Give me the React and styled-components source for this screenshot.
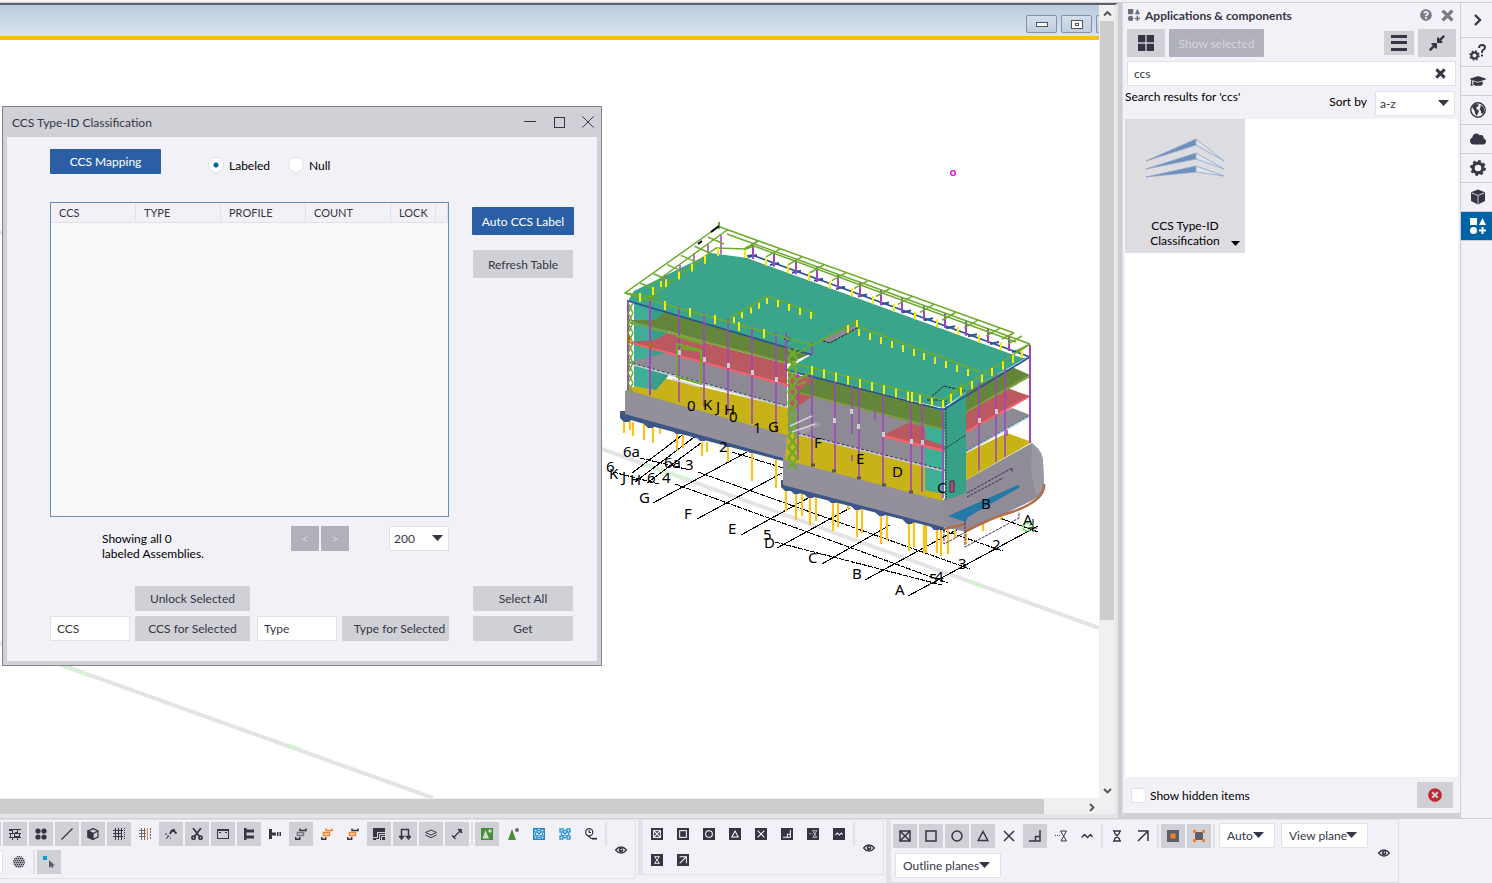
import React from "react";
import styled, { createGlobalStyle, css } from "styled-components";
import {
  FaGraduationCap, FaCloud, FaQuestionCircle, FaCompressAlt, FaTimesCircle,
} from "react-icons/fa";

const c = {
  panel: "#f2f1f7", btn: "#d0d1d6", btnOff: "#b0b1ba", ink: "#363545",
  line: "#e1e1e7", edge: "#cfcfd6", blue: "#2a5fa6", orange: "#f58220",
};

const GlobalStyle = createGlobalStyle`
  * { box-sizing: border-box; }
  body { margin: 0; background: ${c.panel}; }
  body, button, input, select, table {
    font-family: Lato, "Noto Sans", sans-serif; font-size: 12px; line-height: 15px; color: ${c.ink};
  }
  button { border: 0; padding: 0; }
`;

const Page = styled.div`
  min-height: 100vh; display: grid; grid-template-rows: 3px 1fr auto;
`;
const TopStrip = styled.div`background: #f4f4f8; border-bottom: 1px solid ${c.edge};`;
const Main = styled.main`
  display: grid; grid-template-columns: minmax(0, 1fr) 5px 338px 31px; min-height: 0;
`;
const Viewport = styled.section`
  display: grid; grid-template-columns: minmax(0, 1fr) 16px; grid-template-rows: 35px 1fr 16px;
  border-top: 2px solid #5e6068; border-right: 3px solid #e6e6ea; border-bottom: 4px solid #e4e4e9;
  background: #fff;
`;
const WindowBar = styled.div`
  display: flex; justify-content: flex-end; gap: 4px; padding-top: 10px; overflow: hidden;
  background: linear-gradient(#bccbdc, #d8e3f0); border-bottom: 4px solid #fdbe0f;
`;
const WindowButton = styled.button`
  flex: none; display: grid; place-items: center; width: 31px; height: 18px;
  background: linear-gradient(#d3deea, #bfcede); border: 1px solid #8292ab; border-radius: 2px;
  ${(p) => p.$cut && css`width: 3px; border-right: 0; border-radius: 2px 0 0 2px;`}
`;
const Scroll = styled.div`
  display: flex; flex-direction: ${(p) => (p.$vertical ? "column" : "row")}; background: #f0f0f0;
  ${(p) => p.$vertical && css`grid-row: 1 / 3; grid-column: 2;`}
  ${(p) => !p.$vertical && css`grid-column: 1 / 3; padding: 1px 16px 0 0;`}
`;
const Thumb = styled.div`flex: ${(p) => p.$size}; background: #cdcdcd; margin: ${(p) => (p.$vertical ? "0 1px" : "0")};`;
const ScrollRest = styled.div`flex: ${(p) => p.$size};`;
const ScrollArrow = styled.button`display: grid; place-items: center; width: 16px; height: 16px; background: none;`;
const Canvas = styled.div`position: relative; overflow: hidden; background: #fff;`;
const Scene = styled.svg`
  position: absolute; inset: 0; width: 100%; height: 100%;
  text { font-family: "Noto Sans", sans-serif; font-size: 15px; fill: #000; }
`;
const Splitter = styled.div`background: #cdcdd5; border-right: 1px solid #dcdce2;`;

/* dialog */
const Dialog = styled.section`
  position: absolute; left: 2px; top: 66px; width: 600px; height: 560px;
  display: flex; flex-direction: column;
  border: 1px solid #81828d; background: ${c.btn}; padding: 0 4px 4px;
`;
const DialogHead = styled.header`
  height: 30px; flex: none; display: flex; align-items: center; gap: 13px; padding: 0 1px 0 5px;
`;
const DialogTitle = styled.h2`margin: 0; flex: 1; font-size: 12px; font-weight: 400;`;
const HeadButton = styled.button`width: 16px; height: 16px; background: none; display: grid; place-items: center;`;
const DialogBody = styled.div`
  flex: 1; display: flex; gap: 23px; padding: 12px 23px 20px 43px; background: ${c.panel};
`;
const LeftCol = styled.div`width: 399px; display: flex; flex-direction: column;`;
const RightCol = styled.div`
  width: 102px; display: flex; flex-direction: column; justify-content: space-between; padding-top: 58px;
`;
const Stack = styled.div`display: flex; flex-direction: column; align-items: center; gap: ${(p) => p.$gap}px;`;
const Button = styled.button`
  width: ${(p) => p.$w}px; height: ${(p) => p.$h || 25}px; border-radius: 1px; white-space: nowrap;
  padding-left: ${(p) => p.$lead || 0}px;
  background: ${(p) => (p.$primary ? c.blue : c.btn)}; color: ${(p) => (p.$primary ? "#fff" : c.ink)};
  &:disabled { background: ${c.btnOff}; color: #d6d6dc; }
`;
const TopRow = styled.div`display: flex; gap: 47px; margin-bottom: 28px;`;
const Radios = styled.fieldset`
  border: 0; margin: 0; padding: 8px 0 0; display: flex; height: 25px; min-width: 0;
`;
const RadioLabel = styled.label`display: flex; align-items: center; gap: 5px; width: 80px; height: 16px; color: #000;`;
const Radio = styled.input.attrs({ type: "radio" })`
  appearance: none; width: 16px; height: 16px; margin: 0; border-radius: 50%; border: 1px solid ${c.line};
  background: #fff;
  &:checked { background: radial-gradient(circle, #0063a3 0 2px, #fff 3px); }
`;
const TableFrame = styled.div`height: 315px; border: 1px solid #6a8db3; background: #f9f9fc;`;
const Table = styled.table`
  width: 100%; table-layout: fixed; border-collapse: separate; border-spacing: 0; background: ${c.panel};
  th {
    height: 20px; padding: 0 8px; text-align: left; font-size: 11px; font-weight: 400;
    border-right: 1px solid ${c.line}; border-bottom: 1px solid ${c.line}; overflow: hidden;
  }
`;
const PagingRow = styled.div`display: flex; align-items: flex-start; margin-top: 9px; height: 60px;`;
const Status = styled.p`margin: 0; padding: 5px 0 0 52px; width: 241px; color: #000;`;
const Pager = styled.div`display: flex; gap: 2px; width: 98px;`;
const UnlockRow = styled.div`padding-left: 85px; margin-bottom: 5px; height: 25px;`;
const EditRow = styled.div`display: flex; justify-content: space-between;`;
const EditPair = styled.div`display: flex; gap: 5px;`;
const TextField = styled.input`
  width: 80px; height: 25px; padding: 0 6px; background: #fff; border: 1px solid ${c.line};
`;
const SelectWrap = styled.span`
  position: relative; display: inline-block; width: ${(p) => p.$w}px; height: 25px; flex: none;
  margin-top: ${(p) => p.$drop || 0}px;
  svg { position: absolute; right: ${(p) => p.$inset || 6}px; top: 9px; pointer-events: none; }
`;
const SelectBox = styled.select`
  appearance: none; width: 100%; height: 100%; margin: 0; border: 1px solid ${c.line}; border-radius: 1px;
  padding: 0 0 0 ${(p) => p.$pad || 4}px; background: #fff;
`;

/* catalog panel */
const Panel = styled.aside`
  display: flex; flex-direction: column; background: ${c.panel};
  border-right: 1px solid ${c.edge}; border-bottom: 5px solid ${c.btn};
`;
const PanelHead = styled.header`height: 26px; display: flex; align-items: center; gap: 5px; padding: 0 5px 2px 5px;`;
const PanelTitle = styled.h1`margin: 0; flex: 1; font-size: 12px; line-height: 15px; font-weight: 700;`;
const PlainIcon = styled.button`display: grid; place-items: center; background: none; color: #7b7b88; min-width: 16px;`;
const PanelTools = styled.div`display: flex; align-items: center; gap: 4px; padding: 0 4px; height: 28px;`;
const ToolButton = styled.button`
  display: grid; place-items: center; width: ${(p) => p.$w}px; height: ${(p) => p.$h || 28}px;
  background: ${c.btn}; color: ${c.ink}; margin-left: ${(p) => (p.$end ? "auto" : "0")};
`;
const SearchBox = styled.div`
  display: flex; align-items: center; height: 25px; margin: 4px 4px 0; padding: 0 7px 0 6px;
  background: #fff; border: 1px solid ${c.line};
`;
const SearchInput = styled.input`flex: 1; min-width: 0; border: 0; outline: 0; padding: 0; background: none;`;
const ResultRow = styled.div`
  display: flex; align-items: flex-start; height: 33px; padding: 3px 5px 0 2px; color: #000;
`;
const ResultText = styled.span`flex: 1;`;
const SortLabel = styled.label`display: flex; gap: 8px; line-height: 25px;`;
const Results = styled.div`flex: 1; background: #fff; margin: 0 2px;`;
const Tile = styled.button`
  width: 120px; height: 134px; background: #dcdce1; color: #000; display: flex; flex-direction: column;
  align-items: center; padding: 18px 0 5px;
`;
const TileName = styled.span`
  width: 100%; margin-top: auto; display: grid; grid-template-columns: 1fr auto 1fr; align-items: end; white-space: nowrap;
  svg { justify-self: end; margin-right: 5px; }
`;
const TileText = styled.span`grid-column: 2; text-align: center;`;
const PanelFoot = styled.footer`height: 36px; display: flex; align-items: center; padding: 0 7px 0 8px;`;
const CheckLabel = styled.label`display: flex; align-items: center; gap: 4px; flex: 1; color: #000;`;
const Check = styled.input.attrs({ type: "checkbox" })`
  appearance: none; width: 15px; height: 15px; margin: 0; background: #fff; border: 1px solid ${c.line};
`;

const Rail = styled.nav`background: ${c.panel}; border-bottom: 5px solid ${c.panel};`;
const RailButton = styled.button`
  width: 31px; height: ${(p) => p.$h || 29}px; display: grid; place-items: center; padding-left: 2px;
  background: ${(p) => (p.$on ? "#0063a3" : c.panel)}; color: ${(p) => (p.$on ? "#fff" : c.ink)};
  border-bottom: 1px solid ${c.edge};
`;

/* bottom toolbars */
const Toolbars = styled.footer`
  display: flex; align-items: flex-start; height: 65px; border-top: 1px solid ${c.edge}; background: ${c.panel};
`;
const Bar = styled.div`
  display: flex; flex: none; height: ${(p) => p.$h}px; width: ${(p) => p.$w}px; padding: ${(p) => p.$pad};
  border: 1px solid ${c.line}; border-left: ${(p) => (p.$grip ? `5px solid ${c.line}` : "0")};
  margin-right: 2px;
`;
const BarRows = styled.div`flex: 1; display: flex; flex-direction: column; gap: ${(p) => p.$gap}px;`;
const BarRow = styled.div`display: flex; align-items: center; gap: 2px;`;
const Tool = styled.button`
  width: 24px; height: 24px; flex: none; display: grid; place-items: center;
  background: ${(p) => (p.$on ? c.btn : "none")};
`;
const Sep = styled.i`width: 2px; height: 24px; flex: none; background: ${c.line};`;
const RowEdge = styled.i`width: 1px; height: 24px; flex: none; background: ${c.btn};`;
const PlainField = styled.i`width: 3px; height: 24px; background: #fff; border: 1px solid ${c.line}; border-left: 0; margin-right: 2px;`;
const Eye = styled.button`align-self: center; width: 28px; background: none; display: grid; place-items: center;`;
const MenuGroup = styled.div`display: flex; gap: 6px; padding-left: 2px;`;

/* ---------- icons, 12 unit grid ---------- */
const I = ({ children, s = 12, color = c.ink, w = 1, crisp }) => (
  <svg width={s} height={s} viewBox="0 0 12 12" fill="none" stroke={color} strokeWidth={w}
    shapeRendering={crisp ? "crispEdges" : "auto"} aria-hidden="true">{children}</svg>
);
const Caret = () => <svg width="11" height="6" viewBox="0 0 11 6"><path d="M0 0h11L5.500 6z" fill={c.ink} /></svg>;
const Cross = ({ s, color }) => <I s={s} color={color} w={3.200}><path d="M1.500 1.500l9 9M10.500 1.500l-9 9" /></I>;
const Steps = ({ a = c.ink, b = "#777682", d = c.ink }) => (
  <I w={1.500}>
    <path d="M5 .5v2h6V.5" stroke={a} /><path d="M2.500 4.500v3h6v-3z" stroke={b} fill="none" /><path d="M.7 9v2.300h4V9" stroke={d} />
  </I>
);
const shapes = {
  boxx: <><rect x="1" y="1" width="10" height="10" /><path d="M1 1l10 10M11 1L1 11" /></>,
  box: <rect x="1" y="1" width="10" height="10" />,
  circle: <circle cx="6" cy="6" r="5" />,
  tri: <path d="M6 1.500L10.800 10.500H1.200z" />,
  x: <path d="M1 1l10 10M11 1L1 11" />,
  corner: <path d="M11 0v11H0M6.500 11V6.500H11" />,
  glass2: <path d="M0 5.500h1M2 5.500h1M4 5.500h1M5.500 1h6L6 11h5.500L5.500 1" strokeWidth="1" />,
  wave: <path d="M.5 7.500l3-3 3 3 3-3 2 2.500" />,
  glass: <path d="M2 1h8M2 11h8M3.500 1v2l5 6v2M8.500 1v2l-5 6v2" strokeWidth="1.300" />,
  arrow: <path d="M1 1h10v10M11 1L1 11" />,
};
const Shape = ({ n }) => <I w={1.500}>{shapes[n]}</I>;
const SnapTile = ({ n }) => (
  <svg width="12" height="12" viewBox="0 0 12 12" aria-hidden="true">
    <rect width="12" height="12" fill={c.ink} />
    <g transform="translate(2 2) scale(.67)" fill="none" stroke="#fff" strokeWidth="1.500">{shapes[n]}</g>
  </svg>
);
const EyeIcon = () => (
  <svg width="12" height="8" viewBox="0 0 12 8" aria-hidden="true">
    <path d="M.6 4Q3 1 6 1t5.400 3Q9 7 6 7T.6 4z" fill="none" stroke={c.ink} strokeWidth="1.300" />
    <circle cx="6" cy="4" r="2.300" fill={c.ink} /><circle cx="6.300" cy="3.500" r=".7" fill="#fff" />
  </svg>
);
const AppsIcon = ({ s = 12, color = "currentColor" }) => (
  <svg width={s} height={s} viewBox="0 0 16 16" fill={color} aria-hidden="true">
    <path d="M0 0h7v7H0zM12.500 0L16 7H9zM11.500 9h2v2.500H16v2h-2.500V16h-2v-2.500H9v-2h2.500z" /><circle cx="3.500" cy="12.500" r="3.500" />
  </svg>
);
const NodeBoxes = ({ framed }) => (
  <I color="#1e8bcd" w={1.300}>
    {framed && <rect x=".5" y=".5" width="11" height="11" />}
    <rect x="1" y="1" width="3" height="3" /><rect x="8" y="1" width="3" height="3" />
    <rect x="1" y="8" width="3" height="3" /><rect x="8" y="8" width="3" height="3" />
    <path d="M4 4l4 4M8 4L4 8M5 2.500h2M5 9.500h2M2.500 5v2M9.500 5v2" />
  </I>
);

const selectTools = [
  ["Walls", 1, <I crisp w={1}><path d="M0 1.500h12M0 5.500h12M0 9.500h12M3.500 2v3M8.500 2v3M5.500 6v3M1.500 6v3M10.500 6v3M3.500 10v2M8.500 10v2M0 2.500h3M6 4.500h3M5 8.500h5" /></I>],
  ["Points", 1, <I color="none"><g fill={c.ink}><circle cx="3" cy="3" r="2.600" /><circle cx="9" cy="3" r="2.600" /><circle cx="3" cy="9" r="2.600" /><circle cx="9" cy="9" r="2.600" /></g></I>],
  ["Lines", 1, <I w={1.300}><path d="M.5 11.500l11-11" /></I>],
  ["Parts", 1, <I w={1.200}><path d="M6 .6l5 2.400v6L6 11.400 1 9V3zM1 3l5 2.500L11 3" /><path d="M6 5.500L1 3v6l5 2.400z" fill={c.ink} /></I>],
  ["Grids", 1, <I crisp><path d="M0 2.500h9M0 5.500h9M0 8.500h9M2.500 0v12M5.500 0v12M8.500 0v12" /><path d="M11.500 0v12M9 2.500h3M9 8.500h3" strokeDasharray="1 1" /></I>],
  ["Grid line", 0, <I crisp color="#6d6c79"><path d="M0 2.500h7M0 5.500h7M0 8.500h7M2.500 0v12M5.500 0v12" /><path d="M8.500 0v12" stroke={c.orange} /><path d="M11.500 0v12" strokeDasharray="2 1" /></I>],
  ["Welds", 1, <I w={1.800}><path d="M5 5l3-3 3.500 3.500M7 2l-2 4M9 1v3" /><path d="M0 6h2M2 8h2M1 11l3-3M5 10h1" strokeWidth="1" /></I>],
  ["Cuts", 1, <I w={1.700}><path d="M2 0l6.500 8.500M10 0L3.500 8.500" /><circle cx="2.500" cy="9.700" r="1.600" /><circle cx="9.500" cy="9.700" r="1.600" /></I>],
  ["Views", 1, <I w={1} crisp><rect x=".5" y="1.500" width="11" height="9" /><path d="M0 2.500h12M2 4.500h2M8 4.500h2" /></I>],
  ["Bolts", 1, <I color="none"><path d="M1 0h2.500v1.500H11v3H3.500v3H11v3H3.500V12H1z" fill={c.ink} /></I>],
  ["Single bolt", 0, <I color="none"><path d="M0 1h3v3.500h4v3H3V11H0zM8 4h1v4H8zM9.500 4h1v4h-1zM11 4h1v4h-1z" fill={c.ink} /></I>],
  ["Reinforcement", 1, <Steps />],
  ["Rebar set", 0, <Steps a={c.orange} b={c.orange} />],
  ["Rebar group", 0, <Steps b={c.orange} />],
  ["Surfaces", 1, <I crisp><rect width="12" height="12" fill={c.ink} stroke="none" /><path d="M0 9.500h4.500v-5H12M3 12v-.5h3.500v-5H12M8.500 12V8.500H12" stroke="#d0d1d6" /></I>],
  ["Loads", 1, <I w={1.500}><path d="M2.500 9V1.500h7V9M.5 8.500h4L2.500 11zM7.500 8.500h4L9.500 11z" /></I>],
  ["Planes", 1, <I w={1}><path d="M6 2l5.500 2.500L6 7 .5 4.500zM.5 7L6 9.700 11.500 7" /></I>],
  ["Distances", 1, <I w={1.300}><path d="M2.500 9.500L9 3M1 7.500L4.500 11M7 1L11 5" /><circle cx="9.500" cy="2.500" r="1" /></I>],
  null,
  ["Components", 1, <I color="none"><rect width="12" height="12" fill="#4a8a3c" /><path d="M1.500 10.500L4.500 2l3.500 8.500z" fill="#d6dbd2" /><circle cx="9" cy="3" r="1.700" fill="#d6dbd2" /></I>],
  ["Component objects", 0, <I color="none"><path d="M1 12L5 1l4 11z" fill="#4a8a3c" /><circle cx="10" cy="2" r="2" fill="#6d6c79" /></I>],
  ["Assemblies", 0, <NodeBoxes framed />],
  ["Assembly objects", 0, <NodeBoxes />],
  ["Task", 0, <I w={1.200}><circle cx="4.200" cy="4.200" r="3.600" /><path d="M4.200 2v2.500H6M3 7.500l3 3h6" /><path d="M7 10.700h5" strokeWidth="1.800" /></I>],
];
const snapNames = ["boxx", "box", "circle", "tri", "x", "corner", "glass2", "wave"];
const snapOn = [1, 1, 1, 1, 0, 1, 0, 0];

/* ---------- model ---------- */
const G = "#6dab2d", P = "#9f45bf", Y = "#f4f000", B = "#2b4f9b", PILE = "#fbc21b";
const along = (x1, y1, x2, y2, n) =>
  Array.from({ length: n }, (_, i) => [x1 + ((x2 - x1) * i) / (n - 1), y1 + ((y2 - y1) * i) / (n - 1)]);
const sticks = (pts, up, down) => pts.map(([x, y]) => `M${Math.round(x)} ${y - up}V${y + down}`).join("");
const truss = (x1, x2, y1, y2, step) => {
  let d = "";
  for (let y = y1; y < y2; y += step) d += `M${x1} ${y}L${x2} ${y + step}M${x2} ${y}L${x1} ${y + step}`;
  return d;
};
const back = along(736, 233, 1000, 328, 13);
const leftRail = along(640, 283, 708, 237, 6);
const piles = [
  [624, 420, 433], [630, 420, 430], [633, 422, 436], [644, 424, 440], [653, 428, 443], [660, 428, 434],
  [677, 434, 450], [683, 434, 448], [702, 442, 456], [707, 442, 452], [728, 444, 462], [752, 450, 481],
  [776, 456, 488], [786, 490, 511], [796, 492, 520], [802, 492, 516], [810, 496, 525], [816, 496, 521],
  [833, 500, 531], [838, 500, 527], [848, 500, 510], [857, 505, 537], [862, 505, 533], [881, 512, 544],
  [887, 512, 540], [909, 520, 551], [914, 520, 547], [924, 525, 553], [926, 525, 553], [937, 527, 553], [941, 530, 556],
  [948, 530, 554], [955, 530, 538], [966, 528, 544], [983, 520, 531], [1001, 514, 520],
];
const footsL = [[626, 418], [650, 424], [678, 430], [702, 437], [728, 443], [752, 449], [776, 455]];
const footsR = [[787, 487], [796, 490], [810, 494], [833, 499], [857, 506], [881, 512], [909, 520], [936, 526]];
const labels = [
  ["0", 687, 411], ["K", 703, 410], ["J", 716, 412], ["H", 724, 415], ["0", 729, 422], ["1", 753, 433], ["G", 768, 432],
  ["2", 719, 452], ["6a", 623, 457], ["6a", 664, 468], ["3", 685, 470], ["6", 606, 472], ["K", 609, 479], ["J", 622, 482],
  ["H", 630, 485], ["6", 647, 483], ["4", 662, 483], ["G", 639, 503], ["F", 684, 519], ["E", 728, 534], ["5", 763, 540],
  ["D", 764, 548], ["C", 808, 563], ["B", 852, 579], ["A", 895, 595], ["F", 814, 448], ["E", 856, 464], ["D", 892, 477],
  ["C", 937, 493], ["B", 981, 509], ["A", 1023, 525], ["2", 992, 550], ["3", 958, 569], ["4", 935, 582], ["5", 929, 584],
];

const Model = () => (
  <Scene viewBox="0 40 1099 758" preserveAspectRatio="xMinYMin slice" role="img" aria-label="3D model of the building">
    <g fill="none" stroke="#e4e4e4" strokeWidth="4">
      <path d="M0 232L1099 628M0 643L433 798" />
      <path d="M645 465L694 481M970 582L982 587M60 665L90 676M288 745L300 749" stroke="#d4f3d4" strokeWidth="3" />
    </g>
    <g stroke="#000" strokeWidth="1.100" fill="none" shapeRendering="crispEdges">
      <path d="M632 473L685 433M635 482L697 435M647 483L701 443M653 503L747 452M697 519L782 473M741 535L810 497M777 548L850 508M822 564L890 525M865 580L960 528M908 596L1038 526" />
      <path strokeDasharray="5 1" d="M640 458L690 470M613 472L659 484M732 452L783 468M940 529L1003 551M698 472L970 569M675 484L948 583M775 542L942 585M1000 518L1038 532" />
    </g>
    <path d={piles.map(([x, a, b]) => `M${x} ${a}V${b}`).join("")} stroke={PILE} strokeWidth="2.200" />
    <g fill="#3c5687">
      <path d="M621 411L783 455V461L655 427 620 417zM783 481L944 523V530L783 489z" />
      {footsL.concat(footsR).map(([x, y]) => <path key={x} d={`M${x - 6} ${y - 7}h12v7l-3 4h-5l-4-4z`} />)}
    </g>
    {/* left wing */}
    <path d="M625 391L628 389 793 433V461L783 458 625 414z" fill="#93909b" />
    <path d="M627 390L655 376 790 408V436z" fill="#c7b317" />
    <path d="M634 300L668 310V376L655 390 634 386z" fill="#3fae97" />
    <path d="M651 305L668 310V376L656 390 651 388z" fill="#38a089" />
    <path d="M628 320H655L668 310 815 352 787 364z" fill="#64863a" />
    <path d="M628 342L655 340 668 333V350L787 385z" fill="#ba5a60" />
    <path d="M668 333L787 364V385L668 352z" fill="#ba5a60" />
    <path d="M628 362L651 357 668 352 787 385V407z" fill="#8e8a93" />
    <g fill="none">
      <path d="M628 322L787 363" stroke="#7ea03a" strokeWidth="2" />
      <path d="M628 342L790 386" stroke="#f8606b" strokeWidth="2" />
      <path d="M628 363L787 407" stroke="#c7c7cc" strokeWidth="2" />
      <path d="M628 362L787 406" stroke="#254a63" strokeWidth="1" strokeDasharray="3 2" />
    </g>
    {/* front of right wing */}
    <path d="M783 457L943 498V527L783 485z" fill="#93909b" />
    <path d="M788 425L943 468V501L785 460z" fill="#c7b317" />
    <path d="M788 380L943 425V471L820 440 788 432z" fill="#8e8a93" />
    <path d="M788 372L830 384 790 412z" fill="#ba5a60" />
    <path d="M790 369L943 409V431L798 392 812 380z" fill="#64863a" />
    <path d="M793 435L815 422 822 424 796 438z" fill="#9f9ca8" />
    <path d="M925 408H944V494L925 490z" fill="#3fae97" />
    <path d="M908 403L946 412V431L908 420z" fill="#64863a" />
    <path d="M883 435L908 423 925 427V439L945 446V451z" fill="#ba5a60" />
    <path d="M883 436L945 451" stroke="#f8606b" strokeWidth="2.500" />
    <path d="M800 393L946 430" stroke="#7ea03a" strokeWidth="1.500" />
    <path d="M793 433L945 471" stroke="#c7c7cc" strokeWidth="2" />
    <path d="M793 432L945 470" stroke="#3b2a4a" strokeWidth="1" strokeDasharray="3 2" />
    {/* side facade */}
    <path d="M943 500L966 480 1032 443 1038 450 1043 460 1044 487Q1042 496 1031 501L967 532 943 527z" fill="#8f8c97" />
    <path d="M1032 443Q1044 452 1043 463L1044 487 1036 496 1031 470z" fill="#9a98a3" />
    <path d="M944 529L966 524M966 531Q990 518 1012 512 1046 500 1044 484" fill="none" stroke="#b06e48" strokeWidth="2.500" />
    <path d="M948 516L1018 485 1020 487 968 517 966 522z" fill="#2479a6" />
    <path d="M966 453L1007 433 1032 442 966 480z" fill="#c7b317" />
    <path d="M966 430L1012 408 1030 415 966 452z" fill="#8e8a93" />
    <path d="M966 407L1007 388 1030 396 966 432z" fill="#ba5a60" />
    <path d="M966 391L1012 367 1030 375 966 412z" fill="#64863a" />
    <path d="M966 432L1030 396" stroke="#f8606b" strokeWidth="2" />
    <path d="M966 412L1030 376" stroke="#7ea03a" strokeWidth="2" />
    <path d="M966 452L1030 416" stroke="#c7c7cc" strokeWidth="2" />
    <path d="M966 451L1030 415" stroke="#1e6d8c" strokeWidth="1" strokeDasharray="3 1" />
    {/* roof */}
    <path d="M711 253L747 258 1022 358 1028 357 966 392 943 408 786 370 812 354 628 301 634 291z" fill="#3aa58b" />
    <path d="M944 409L966 392V493L945 500z" fill="#36a088" />
    <path d="M823 339L856 325 857 329 828 343z" fill="#8e8a93" />
    <path d="M823 341L830 343 857 328M932 396L944 386 965 391M927 400H944" fill="none" stroke="#222" strokeWidth="1" strokeDasharray="3 1" />
    <path d="M784 339l4-2 4 2-5 3zM946 400V500M946 448L966 435" fill="none" stroke="#333" strokeWidth="1" strokeDasharray="2 1" />
    <path d="M628 301L812 355M786 370L943 410 1030 357M747 256L752 255 1030 357" stroke={B} strokeWidth="1.600" fill="none" />
    <path d={back.map(([x, y]) => `M${x + 12} ${y + 24}l9 -2`).join("")} stroke={B} strokeWidth="2" />
    {/* columns */}
    <g stroke={P} fill="none">
      <path d="M628 300V390M650 297V395M1030 345V443" strokeWidth="2" />
      <path d="M679 306V402M704 313V407M728 319V414M752 326V424M776 332V432M786 333V370M812 343V355" strokeWidth="1.600" />
      <path d="M798 372V460M812 366V467M835 382V471M859 388V478M883 396V485M911 404V492M922 404V492M943 408V498" strokeWidth="1.600" />
      <path d="M852 386V434M852 455V461M875 410V420M979 382V470M996 374V462M1005 369V457M1007 430V436" strokeWidth="1.500" />
      <path d={sticks(along(753, 244, 1009, 336, 13), 0, 15)} strokeWidth="2" />
      <path d="M721 235V254M708 244V253M694 253V262M680 265V273M665 275V282" strokeWidth="1.500" />
    </g>
    {/* rails */}
    <g stroke={G} fill="none" strokeWidth="1.500">
      <path d="M720 227L1014 333M727 234L1030 344M718 227L625 293 647 300 716 248 746 249 754 246 1016 342M727 230L650 286" />
      <path d="M625 293L812 345M788 358L857 321M857 326L981 372M730 318L767 296 817 314M788 362L943 400 1030 344M943 400L963 384" />
      <path d="M625 293L660 298M1014 333L1002 339M1030 344L1016 351M746 249L758 241" />
      <path d={back.map(([x, y]) => `M${x + 22} ${y + 8}l-14 8`).join("")} />
      <path d={leftRail.map(([x, y]) => `M${x} ${y}l16 7`).join("")} />
      <path d={truss(628, 633, 303, 388, 10)} strokeWidth="1.600" />
      <path d={truss(788, 797, 348, 460, 11)} strokeWidth="2.600" />
      <path d="M677 344V377L701 384V350zM677 336L703 344M680 348L701 351M797 380L812 372M797 385L806 382" strokeWidth="2" />
    </g>
    <g stroke={Y} strokeWidth="2" fill="none">
      <path d={sticks(along(665, 303, 764, 331, 5), 2, 7)} />
      <path d={sticks(along(812, 368, 920, 397, 10), 2, 7)} />
      <path d={sticks(along(734, 318, 767, 299, 5), 1, 5)} />
      <path d={sticks(along(778, 301, 811, 313, 4), 1, 6)} />
      <path d={sticks(along(859, 330, 968, 370, 11), 1, 6)} />
      <path d={sticks(along(745, 253, 1022, 353, 14), 3, 5)} />
      <path d={sticks(along(951, 396, 1013, 357, 7), 2, 6)} />
      <path d={sticks(along(653, 289, 718, 250, 6), 2, 6)} />
      <path d="M640 293V302M661 281V287M943 400V408M932 398V406M912 392V402M857 320V327M848 325V333" />
    </g>
    <path d="M719 222V229" stroke={G} strokeWidth="2" /><path d="M711 232L719 226M698 244l4-3" stroke="#000" strokeWidth="2" />
    <g fill="#d0c9d8"><path d="M678 350h3v5h-3zM703 357h3v5h-3zM727 363h3v5h-3zM751 370h3v5h-3zM775 377h3v5h-3zM833 418h3v5h-3zM850 409h3v5h-3zM857 424h3v5h-3zM882 432h3v5h-3zM910 439h3v5h-3zM921 440h3v5h-3zM978 418h3v5h-3zM995 409h3v5h-3z" /></g>
    <path d="M627 336h3v7h-3zM649 342h3v7h-3z" fill="#b4691f" />
    <path d="M790 426L812 416M792 432L815 424M672 379L700 387" stroke="#d6d3dd" strokeWidth="1.500" />
    <g fill="none" stroke="#4b2460" strokeDasharray="3 1">
      <path d="M967 493L1012 468V472M967 497L1003 478M965 522V547L1019 518V512M944 530V544L966 532" />
    </g>
    <path d="M950 481h4v11h-4z" fill="#b4525c" stroke="#4b2460" />
    <g stroke="#555"><path d="M832 471h4M857 478h4M882 485h4M909 492h4M811 465h4" strokeWidth="3" /></g>
    <circle cx="1027" cy="527" r="4" fill="none" stroke="#42e042" strokeWidth="2" strokeDasharray="2 1" />
    <path d="M1033 519V532M1027 528h10" stroke="#000" />
    <circle cx="953" cy="173" r="2.300" fill="none" stroke="#e600e6" strokeWidth="1.300" />
    {labels.map(([t, x, y]) => <text key={`${x}-${y}`} x={x} y={y}>{t}</text>)}
  </Scene>
);

const Chevron = ({ d }) => <svg width="9" height="9" viewBox="0 0 9 9"><path d={d} fill="none" stroke="#505050" strokeWidth="1.800" /></svg>;

const ClassificationDialog = () => (
  <Dialog aria-label="CCS Type-ID Classification">
    <DialogHead>
      <DialogTitle>CCS Type-ID Classification</DialogTitle>
      <HeadButton aria-label="Minimize"><I><path d="M0 5.500h12" /></I></HeadButton>
      <HeadButton aria-label="Maximize"><I crisp><rect x="1" y="1" width="10" height="10" /></I></HeadButton>
      <HeadButton aria-label="Close"><I><path d="M.5 .5l11 11M11.500 .5l-11 11" /></I></HeadButton>
    </DialogHead>
    <DialogBody>
      <LeftCol>
        <TopRow>
          <Button $primary $w={111}>CCS Mapping</Button>
          <Radios>
            <RadioLabel><Radio name="kind" defaultChecked />Labeled</RadioLabel>
            <RadioLabel><Radio name="kind" />Null</RadioLabel>
          </Radios>
        </TopRow>
        <TableFrame>
          <Table>
            <colgroup><col width="85" /><col width="85" /><col width="85" /><col width="85" /><col width="45" /><col /></colgroup>
            <thead><tr><th>CCS</th><th>TYPE</th><th>PROFILE</th><th>COUNT</th><th>LOCK</th><th aria-label="Filler" /></tr></thead>
          </Table>
        </TableFrame>
        <PagingRow>
          <Status>Showing all 0<br />labeled Assemblies.</Status>
          <Pager><Button disabled $w={28}>&lt;</Button><Button disabled $w={28}>&gt;</Button></Pager>
          <SelectWrap $w={60}><SelectBox aria-label="Rows per page"><option>200</option></SelectBox><Caret /></SelectWrap>
        </PagingRow>
        <UnlockRow><Button $w={115}>Unlock Selected</Button></UnlockRow>
        <EditRow>
          <EditPair><TextField aria-label="CCS" defaultValue="CCS" /><Button $w={115}>CCS for Selected</Button></EditPair>
          <EditPair><TextField aria-label="Type" defaultValue="Type" /><Button $w={107} $lead={8}>Type for Selected</Button></EditPair>
        </EditRow>
      </LeftCol>
      <RightCol>
        <Stack $gap={15}><Button $primary $w={102} $h={28}>Auto CCS Label</Button><Button $w={100} $h={28}>Refresh Table</Button></Stack>
        <Stack $gap={5}><Button $w={100}>Select All</Button><Button $w={100}>Get</Button></Stack>
      </RightCol>
    </DialogBody>
  </Dialog>
);

const TileArt = () => (
  <svg width="80" height="46" viewBox="0 0 80 46" aria-hidden="true">
    <g fill="#6f8fbb" stroke="#8ea7cc" strokeWidth=".8">
      <path d="M1 24L51 2V8zM1 32L51 16V22zM1 40L51 29V35z" />
      <path d="M51 2L79 24 51 8zM51 16L79 32 51 22zM51 29L79 39 51 35z" fill="#e0e3ea" />
    </g>
  </svg>
);

const CatalogPanel = () => (
  <Panel>
    <PanelHead>
      <AppsIcon color="#6d6c79" />
      <PanelTitle>Applications &amp; components</PanelTitle>
      <PlainIcon aria-label="Help"><FaQuestionCircle size={12} /></PlainIcon>
      <PlainIcon aria-label="Close"><Cross s={13} color="#7b7b88" /></PlainIcon>
    </PanelHead>
    <PanelTools>
      <ToolButton $w={38} aria-label="Thumbnails"><I s={16} color="none"><path fill={c.ink} d="M0 0h5.500v5.500H0zM6.500 0H12v5.500H6.500zM0 6.500h5.500V12H0zM6.500 6.500H12V12H6.500z" /></I></ToolButton>
      <Button disabled $w={95} $h={28}>Show selected</Button>
      <ToolButton $w={30} $h={24} $end aria-label="List"><svg width="16" height="16" viewBox="0 0 16 16"><path fill={c.ink} d="M0 0h16v3H0zM0 6h16v3H0zM0 13h16v3H0z" /></svg></ToolButton>
      <ToolButton $w={38} aria-label="Collapse"><FaCompressAlt size={18} /></ToolButton>
    </PanelTools>
    <SearchBox>
      <SearchInput aria-label="Search" defaultValue="ccs" />
      <PlainIcon aria-label="Clear"><Cross s={11} color={c.ink} /></PlainIcon>
    </SearchBox>
    <ResultRow>
      <ResultText>Search results for 'ccs'</ResultText>
      <SortLabel>Sort by
        <SelectWrap $w={80} $drop={2}><SelectBox><option>a-z</option></SelectBox><Caret /></SelectWrap>
      </SortLabel>
    </ResultRow>
    <Results>
      <Tile>
        <TileArt />
        <TileName><TileText>CCS Type-ID<br />Classification</TileText>
          <svg width="9" height="9" viewBox="0 0 9 9"><path d="M0 2h9L4.500 7z" fill="#000" /></svg></TileName>
      </Tile>
    </Results>
    <PanelFoot>
      <CheckLabel><Check />Show hidden items</CheckLabel>
      <ToolButton $w={36} $h={26} aria-label="Errors"><FaTimesCircle size={14} color="#c4262e" /></ToolButton>
    </PanelFoot>
  </Panel>
);

const SideRail = () => (
  <Rail>
    <RailButton $h={35} aria-label="Collapse"><svg width="10" height="12" viewBox="0 0 10 12"><path d="M2 1l5 5-5 5" fill="none" stroke={c.ink} strokeWidth="2.400" /></svg></RailButton>
    <RailButton aria-label="Assistant">
      <svg width="17" height="17" viewBox="0 0 17 17" fill="none" stroke={c.ink}>
        <circle cx="5.500" cy="11.500" r="3" strokeWidth="2" /><circle cx="5.500" cy="11.500" r="4.500" strokeWidth="1.500" strokeDasharray="1.800 1.730" />
        <path d="M10 4q0-3 3-3t3 2.500q0 1.500-1.500 2.200T13 8v1M13 10.500v2" strokeWidth="1.900" />
      </svg>
    </RailButton>
    <RailButton aria-label="Learn"><FaGraduationCap size={16} /></RailButton>
    <RailButton aria-label="Online"><svg width="16" height="16" viewBox="0 0 16 16"><circle cx="8" cy="8" r="7.200" fill="none" stroke={c.ink} strokeWidth="1.400" /><path d="M2 5l3-3 4 .5-1 2-2 1 1 2 2 1-1 3-1.500 2.500L5 11 4.500 8.500zM10.500 3l3 2 .8 4-1.800 3-1.500-1V9L9.500 7l1-1.500z" fill={c.ink} /></svg></RailButton>
    <RailButton aria-label="Cloud"><FaCloud size={16} /></RailButton>
    <RailButton aria-label="Settings"><svg width="16" height="16" viewBox="0 0 16 16" fill="none" stroke={c.ink}><circle cx="8" cy="8" r="4.900" strokeWidth="3.200" /><circle cx="8" cy="8" r="6.900" strokeWidth="2" strokeDasharray="2.700 2.720" /></svg></RailButton>
    <RailButton aria-label="Model"><svg width="16" height="16" viewBox="0 0 16 16"><path d="M8 .5l7 2.800v8.700L8 15.500 1 12V3.300z" fill={c.ink} /><path d="M1.500 3.800L8 6.500l6.500-2.700M8 6.500v8.500" fill="none" stroke="#d9d9e0" strokeWidth=".9" /></svg></RailButton>
    <RailButton $on aria-label="Applications and components"><AppsIcon s={16} /></RailButton>
  </Rail>
);

const Drop = ({ w, label }) => (
  <SelectWrap $w={w} $inset={11}><SelectBox $pad={7} aria-label={label}><option>{label}</option></SelectBox><Caret /></SelectWrap>
);

const BottomBars = () => (
  <Toolbars>
    <Bar $h={60} $w={636} $pad="2px 1px 0 0">
      <BarRows $gap={4}>
        <BarRow>
          <RowEdge />
          {selectTools.map((t, i) => (t ? <Tool key={i} $on={t[1]} aria-label={t[0]}>{t[2]}</Tool> : <Sep key={i} />))}
          <Sep />
        </BarRow>
        <BarRow>
          <PlainField />
          <Tool aria-label="Hatch">
            <svg width="12" height="12" viewBox="0 0 12 12"><defs><pattern id="dots" width="2" height="4" patternUnits="userSpaceOnUse"><path d="M0 0h1.200v1.200H0zM1 2h1v1.200H1zM0 2h.2v1.200H0z" fill={c.ink} /></pattern></defs><circle cx="6" cy="6" r="6" fill="#b9b9c2" /><circle cx="6" cy="6" r="6" fill="url(#dots)" /></svg>
          </Tool>
          <Sep />
          <Tool $on aria-label="Select"><svg width="12" height="12" viewBox="0 0 12 12"><path d="M0 0h4v4H0z" fill="#0a9bdc" /><path d="M6 4v8l2-1.700 1 1.700 1.500-1-1-1.500H12z" fill="#5d5c6a" /></svg></Tool>
        </BarRow>
      </BarRows>
      <Eye aria-label="Visibility"><EyeIcon /></Eye>
    </Bar>
    <Bar $grip $h={56} $w={246} $pad="2px 0 0 2px">
      <BarRows $gap={2}>
        <BarRow>{snapNames.map((n) => <Tool key={n} aria-label={`Snap ${n}`}><SnapTile n={n} /></Tool>)}<Sep /></BarRow>
        <BarRow><Tool aria-label="Snap glass"><SnapTile n="glass" /></Tool><Tool aria-label="Snap arrow"><SnapTile n="arrow" /></Tool></BarRow>
      </BarRows>
      <Eye aria-label="Visibility"><EyeIcon /></Eye>
    </Bar>
    <Bar $grip $h={64} $w={513} $pad="3px 0 0 2px">
      <BarRows $gap={5}>
        <BarRow>
          {snapNames.map((n, i) => <Tool key={n} $on={snapOn[i]} aria-label={`Snap to ${n}`}><Shape n={n} /></Tool>)}
          <Sep />
          <Tool aria-label="Nearest"><Shape n="glass" /></Tool><Tool aria-label="Any"><Shape n="arrow" /></Tool>
          <Sep />
          <Tool $on aria-label="Reference"><I color="none"><rect width="12" height="12" fill="#5d5c6c" /><rect x="3.500" y="3.500" width="5" height="5" fill={c.orange} /></I></Tool>
          <Tool $on aria-label="Geometry"><I color="none"><rect x="2" y="2" width="8" height="8" fill="#5d5c6c" /><path d="M0 0h3v3H0zM9 0h3v3H9zM0 9h3v3H0zM9 9h3v3H9z" fill={c.orange} /></I></Tool>
          <Sep />
          <MenuGroup><Drop w={56} label="Auto" /><Drop w={87} label="View plane" /></MenuGroup>
        </BarRow>
        <BarRow><MenuGroup><Drop w={106} label="Outline planes" /></MenuGroup></BarRow>
      </BarRows>
      <Eye aria-label="Visibility"><EyeIcon /></Eye>
    </Bar>
  </Toolbars>
);

export default function App() {
  return (
    <>
      <GlobalStyle />
      <Page>
        <TopStrip />
        <Main>
          <Viewport>
            <WindowBar>
              <WindowButton aria-label="Minimize view"><svg width="12" height="5"><rect x=".5" y=".5" width="11" height="4" fill="#fff" stroke="#4f5461" /></svg></WindowButton>
              <WindowButton aria-label="Restore view"><svg width="12" height="9"><rect x=".5" y=".5" width="11" height="8" fill="#fff" stroke="#4f5461" /><rect x="4.500" y="3.500" width="3" height="2" fill="none" stroke="#4f5461" /></svg></WindowButton>
              <WindowButton $cut aria-label="Close view" />
            </WindowBar>
            <Scroll $vertical>
              <ScrollArrow aria-label="Scroll up"><Chevron d="M1 6.500l3.500-3.500L8 6.500" /></ScrollArrow>
              <Thumb $vertical $size={598} /><ScrollRest $size={162} />
              <ScrollArrow aria-label="Scroll down"><Chevron d="M1 3l3.500 3.500L8 3" /></ScrollArrow>
            </Scroll>
            <Canvas><Model /><ClassificationDialog /></Canvas>
            <Scroll>
              <Thumb $size={1044} /><ScrollRest $size={39} />
              <ScrollArrow aria-label="Scroll right"><Chevron d="M3 1l3.500 3.500L3 8" /></ScrollArrow>
            </Scroll>
          </Viewport>
          <Splitter />
          <CatalogPanel />
          <SideRail />
        </Main>
        <BottomBars />
      </Page>
    </>
  );
}
